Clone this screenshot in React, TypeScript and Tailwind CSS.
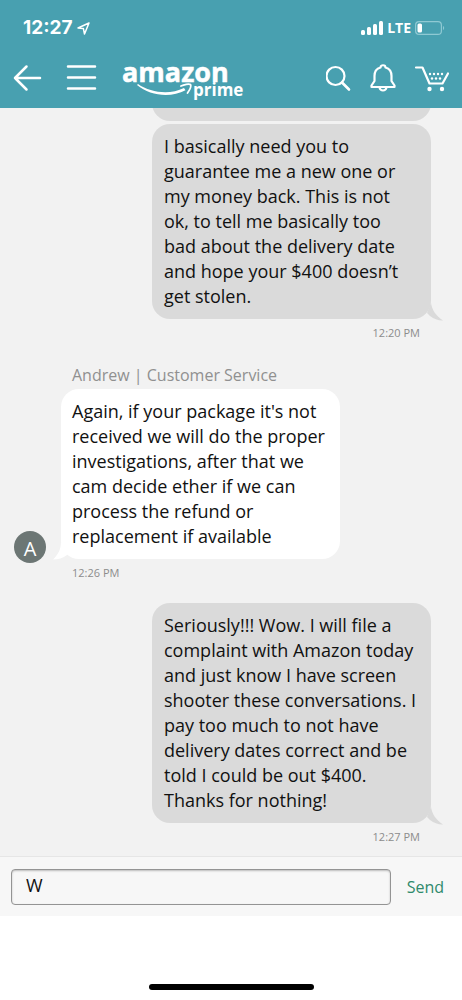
import { useState } from "react";
import clsx from "clsx";

type Message = {
  id: number;
  from: "customer" | "agent";
  author?: string;
  text: string;
  time: string;
};

const messages: Message[] = [
  {
    id: 1,
    from: "customer",
    text: "I basically need you to\nguarantee me a new one or\nmy money back. This is not\nok, to tell me basically too\nbad about the delivery date\nand hope your $400 doesn’t\nget stolen.",
    time: "12:20 PM",
  },
  {
    id: 2,
    from: "agent",
    author: "Andrew | Customer Service",
    text: "Again, if your package it's not\nreceived we will do the proper\ninvestigations, after that we\ncam decide ether if we can\nprocess the refund or\nreplacement if available",
    time: "12:26 PM",
  },
  {
    id: 3,
    from: "customer",
    text: "Seriously!!! Wow. I will file a\ncomplaint with Amazon today\nand just know I have screen\nshooter these conversations. I\npay too much to not have\ndelivery dates correct and be\ntold I could be out $400.\nThanks for nothing!",
    time: "12:27 PM",
  },
];

function StatusBar() {
  return (
    <div className="flex h-12 items-center justify-between pt-2 pr-[17px] pl-[23px]">
      <div className="flex items-center gap-1">
        <span className="font-['Inter'] text-[19px] leading-6 font-bold">12:27</span>
        <svg width="13" height="13" viewBox="0 0 13 13" fill="none" stroke="currentColor" strokeWidth="1.5" strokeLinejoin="round">
          <path d="M12 1 1 6l5.4.6L7.500 12z" />
        </svg>
      </div>
      <div className="flex items-center gap-1">
        <svg width="22" height="14" viewBox="0 0 22 14" fill="currentColor">
          <rect x="0" y="9" width="4" height="5" rx="1.5" />
          <rect x="6" y="6" width="4" height="8" rx="1.5" />
          <rect x="12" y="3" width="4" height="11" rx="1.5" />
          <rect x="18" y="0" width="4" height="14" rx="1.5" />
        </svg>
        <span className="font-['Open_Sans'] text-[14px] leading-5 font-bold">LTE</span>
        <svg width="30" height="14" viewBox="0 0 30 14" fill="none">
          <rect x="0.6" y="0.6" width="25.8" height="12.8" rx="3.5" stroke="#8fc9d3" strokeWidth="1.2" />
          <rect x="2.5" y="2.5" width="4.5" height="9" rx="1.5" fill="white" />
          <path d="M28 5c1.6.6 1.6 3.4 0 4z" fill="#8fc9d3" />
        </svg>
      </div>
    </div>
  );
}

function AmazonPrimeLogo() {
  return (
    <svg className="overflow-visible" width="124" height="46" viewBox="0 0 124 46" fill="none">
      <text x="0" y="27" fill="white" stroke="white" strokeWidth="0.5" fontFamily="'Open Sans', sans-serif" fontWeight="700" fontSize="27">
        amazon
      </text>
      <text x="71" y="41" fill="white" fontFamily="'Open Sans', sans-serif" fontWeight="700" fontSize="17">
        prime
      </text>
      <path d="M16 29c13 9 32 11 46 4l1.500 2.200C49 43 28 41 15 30z" fill="white" />
      <path d="M59 31c3-1.500 8-2.500 9.500-1.500.8 1.500-.8 5.500-3 8.500" stroke="white" strokeWidth="1.8" strokeLinecap="round" />
    </svg>
  );
}

function NavBar() {
  return (
    <nav className="flex h-[60px] items-center justify-between px-3">
      <div className="flex items-center">
        <button type="button" aria-label="Back" className="mr-6">
          <svg width="30" height="28" viewBox="0 0 30 28" fill="none" stroke="currentColor" strokeWidth="2.5" strokeLinecap="round" strokeLinejoin="round">
            <path d="M14.500 2.500 3 14l11.500 11.500M3 14h25" />
          </svg>
        </button>
        <button type="button" aria-label="Menu" className="mr-6">
          <svg width="32" height="28" viewBox="0 0 32 28" fill="none" stroke="currentColor" strokeWidth="2.5" strokeLinecap="round">
            <path d="M2 2.500h27M2 13.500h27M2 24.500h27" />
          </svg>
        </button>
        <a href="#home" aria-label="Amazon Prime">
          <AmazonPrimeLogo />
        </a>
      </div>
      <div className="flex items-center gap-[18px]">
        <button type="button" aria-label="Search">
          <svg width="26" height="28" viewBox="0 0 26 28" fill="none" stroke="currentColor" strokeWidth="2.2" strokeLinecap="round">
            <circle cx="9.5" cy="12" r="9" />
            <path d="m16 18.500 7 7" strokeWidth="2.6" />
          </svg>
        </button>
        <button type="button" aria-label="Notifications">
          <svg width="26" height="28" viewBox="0 0 26 28" fill="none" stroke="currentColor" strokeWidth="2.2" strokeLinecap="round" strokeLinejoin="round">
            <path d="M10.500 3.500c0-3 5-3 5 0 4.500 1.200 6 4.500 6 8.500v5l3 4.500v1.500h-23v-1.500L4.500 17v-5c0-4 1.500-7.300 6-8.500z" />
            <path d="M9.500 23.500c1 4 6 4 7 0" />
          </svg>
        </button>
        <button type="button" aria-label="Cart">
          <svg width="36" height="28" viewBox="0 0 36 28" fill="none" stroke="currentColor" strokeWidth="2.2" strokeLinecap="round" strokeLinejoin="round">
            <path d="M2 3.500h6.500L15.500 19.500H28.500l5.500-10" />
            <g fill="currentColor" stroke="none">
              <circle cx="15.5" cy="25" r="2.2" />
              <circle cx="28" cy="25" r="2.2" />
              <circle cx="16" cy="10" r="1.2" />
              <circle cx="20" cy="10" r="1.2" />
              <circle cx="24" cy="10" r="1.2" />
              <circle cx="28" cy="10" r="1.2" />
              <circle cx="18" cy="14.5" r="1.2" />
              <circle cx="22" cy="14.5" r="1.2" />
              <circle cx="26" cy="14.5" r="1.2" />
            </g>
          </svg>
        </button>
      </div>
    </nav>
  );
}

function ChatMessage({ message }: { message: Message }) {
  const mine = message.from === "customer";

  return (
    <article className={clsx("flex flex-col", mine ? "items-end pr-[31px]" : "items-start pl-[61px]")}>
      {message.author && (
        <h2 className="mb-[2px] pl-[11px] text-[16px] leading-6 text-[#909090]">{message.author}</h2>
      )}
      <div
        className={clsx(
          "relative w-[279px] rounded-[18px] py-[10px] text-[18px] leading-[25px] text-[#111111]",
          mine ? "bg-[#dadada] pl-3" : "bg-white pl-[11px]"
        )}
      >
        <p className="whitespace-pre">{message.text}</p>
        {mine ? (
          <svg className="absolute -right-3 -bottom-[2px] text-[#dadada]" width="18" height="20" viewBox="0 0 18 20" fill="currentColor">
            <path d="M6 2c1 7 5 13 12 17.500-4 .3-9-1.500-13-4.500L2 12z" />
          </svg>
        ) : (
          <>
            <svg className="absolute -bottom-[1px] -left-2 text-white" width="18" height="20" viewBox="0 0 18 20" fill="currentColor">
              <path d="M8 2C8 9 5 15 0 19.500c5 0 10-1.500 14-4.500l3-3z" />
            </svg>
            <span className="absolute -bottom-1 -left-[47px] flex size-8 items-center justify-center rounded-full bg-[#6c7674] pt-1 text-[20px] leading-6 text-white">
              A
            </span>
          </>
        )}
      </div>
      <time className="mt-[6px] px-[11px] text-[11px] leading-4 text-[#8c8c8c]">{message.time}</time>
    </article>
  );
}

export default function App() {
  const [draft, setDraft] = useState("W");

  return (
    <div className="flex min-h-screen flex-col bg-white font-['Open_Sans',sans-serif]">
      <header className="bg-[#48a0b0] text-white">
        <StatusBar />
        <NavBar />
      </header>

      <main className="bg-[#f2f2f2] pb-[11px]">
        {/* end of the previous message, scrolled under the header */}
        <div className="mr-[31px] mb-[3px] ml-auto h-[13px] w-[279px] overflow-hidden">
          <div className="-mt-7 h-[41px] rounded-[18px] bg-[#dadada]" />
        </div>
        <div className="flex flex-col gap-[22px]">
          {messages.map((message) => (
            <ChatMessage key={message.id} message={message} />
          ))}
        </div>
      </main>

      <form
        className="flex h-[60px] items-center gap-4 border-t border-[#e6e6e6] bg-[#f7f7f7] pr-[18px] pl-[11px]"
        onSubmit={(e) => {
          e.preventDefault();
          setDraft("");
        }}
      >
        <input
          type="text"
          aria-label="Message"
          value={draft}
          onChange={(e) => setDraft(e.target.value)}
          className="h-9 min-w-0 flex-1 rounded-[4px] border border-[#949494] bg-[#f7f7f7] px-[14px] pb-1 text-[18px] text-[#111111] shadow-[inset_0_1px_2px_#bbbbbb] outline-none"
        />
        <button type="submit" className="text-[16px] leading-6 text-[#2f8a6c]">
          Send
        </button>
      </form>

      <div className="flex flex-1 items-end justify-center pb-[10px]">
        <div className="h-[6px] w-[165px] rounded-full bg-black" />
      </div>
    </div>
  );
}
